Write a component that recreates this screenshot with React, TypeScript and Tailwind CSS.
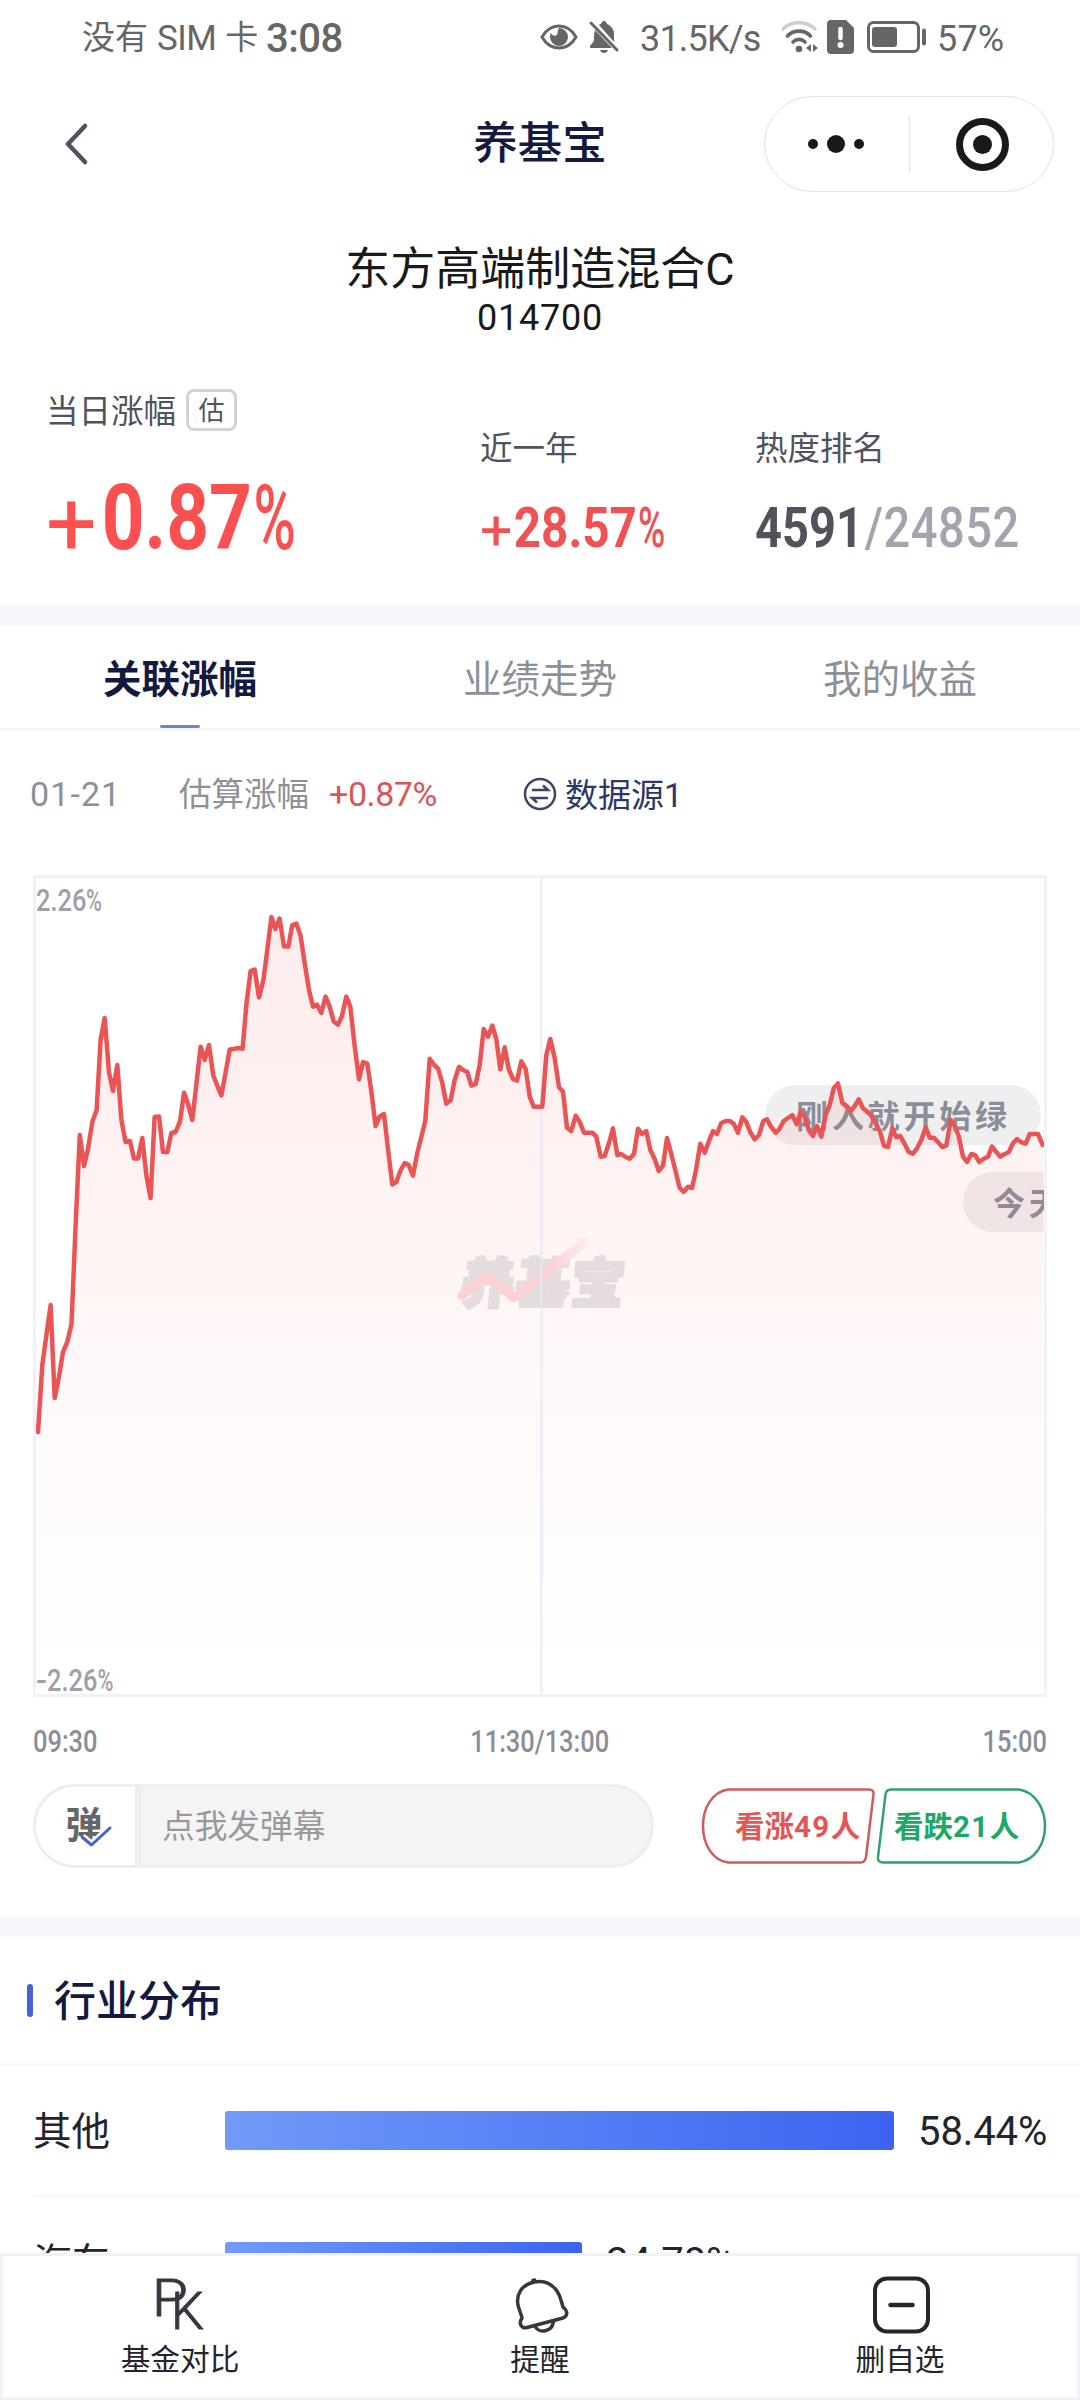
const axisTimes = ["09:30", "11:30/13:00", "15:00"];

const tabs = [
  { id: "related", title: "关联涨幅", active: true },
  { id: "trend", title: "业绩走势", active: false },
  { id: "income", title: "我的收益", active: false },
];

const industries = [
  { name: "其他", width: 669, value: "58.44%" },
  { name: "汽车", width: 357, value: "24.78%" },
];

// Intraday estimate, one vertex per minute
const trend =
  "38,1432 42.3,1365 46.5,1334.5 50.6,1305 54.7,1398 59,1376.6 63,1352 67.3,1342 71.5,1324 75.7,1223.6 79.8,1135 84,1166 88,1149 92.3,1122 96.6,1110 100.6,1040 104.7,1018 109,1072.4 113,1091 117.3,1065 121.4,1120 125.6,1142 130,1141 134,1158.5 138,1158.5 142.3,1138 146.4,1175.7 150.6,1198 154.6,1117 159,1116.4 163,1152 167.3,1152 171.4,1133 175.6,1132 180,1121.4 184,1092.7 188,1103.8 192.3,1120 196.4,1084 200.6,1046.8 204.7,1059.8 209,1045 213.3,1075.5 217.4,1085.8 221.4,1095.4 225.6,1072.4 229.7,1049.4 234,1049 238,1048 242.6,1048.7 246.5,1003.5 250.6,971 254.7,969.5 259,997.4 263.3,980.5 267.3,950 271.4,917 275.4,929 279.6,918.5 284,946.5 288.3,946.5 292.3,925 296.4,923.5 300.6,935.8 304.6,962.6 309,990 313,1006.6 317,1004.7 321.3,1013 325.6,996.6 329.7,1006.6 333.7,1021.5 338,1024.6 342,1016 346.3,996.6 350.3,1006.6 354.6,1045.6 359,1079.3 363,1062 367.3,1063.6 371.6,1093.5 375.6,1126 379.6,1116.4 384,1114 388,1149 392.3,1184.5 396.3,1182 400.7,1170 404.7,1163 408.7,1165 413,1175.7 417.3,1153 425.3,1121 429.7,1058.7 434,1064.7 438.3,1069 442.3,1083 446.3,1103.7 450.7,1100 454.7,1080 459,1066.7 463,1070 467.3,1072 471.3,1085.7 475.7,1084 479.7,1065 483.7,1029 488,1036.7 492.3,1025.5 496.3,1039 500.3,1069.3 504.7,1047.3 508.7,1069 513,1079 517,1080.7 521.3,1061.3 525.7,1069 529.7,1096.7 533.7,1106.7 542.3,1106.7 546.3,1055 550.3,1039 554.7,1058 559,1087.3 563,1091.7 567,1127.7 571.3,1131 575.7,1115.7 579.7,1122 584,1132.7 592.3,1132.7 596.3,1136.7 600.7,1156.7 604.7,1155.7 609,1143 613,1128.3 617.3,1155 621.3,1154 625.7,1157 629.7,1158.7 634,1154 638,1128.7 642,1134 646.3,1131 650.3,1150 654.7,1159 658.7,1171 663,1165.7 667,1138 671.3,1154 675.7,1171.7 679.7,1188 683.7,1192 688,1186.7 692,1188 696,1170 700.3,1143.7 704.7,1152.7 708.7,1141.7 713,1131 717,1134 721.3,1123 725.7,1121 730,1121 734,1124.3 738,1132.7 742.3,1117.3 746.3,1122 750.3,1132.3 754.7,1139.3 759,1135 763.3,1121 767,1119.3 771,1126.7 775.7,1132.7 779.3,1129.3 783.7,1121 788,1118 792.3,1115 796.7,1124.3 800.7,1111.7 804.7,1116.7 809,1130.7 813,1136 817,1126 821.3,1136.7 825.7,1114.3 829.7,1105 833.7,1088.3 838,1083.5 842.3,1102.7 846.7,1106 851,1111 854.7,1106 858.7,1099.3 863,1108.3 867.3,1111.7 871.3,1115.7 875.7,1123.3 880,1131.7 884,1145.7 888,1147 892.3,1128.3 896.3,1137.3 900.3,1136 904.3,1143.3 908.7,1152 913,1153.7 917,1148.3 921.3,1140 925.7,1127.3 929.7,1137.7 934,1137.7 938,1142 942.3,1147 946.3,1145.7 950.7,1120 954.7,1126 958.7,1136 963,1156.7 967,1162 971.3,1154 975.3,1155.3 979.3,1162 983.7,1158.7 988,1156.7 992,1146.7 996.3,1152 1000.3,1156.7 1004.7,1154 1008.7,1152.3 1013,1143.3 1017,1139 1021.3,1142.3 1025.7,1143.7 1029.7,1134 1038,1134 1042.7,1145";

function StatusBar() {
  return (
    <div className="flex h-[74px] items-center pl-[82px] text-[#666666]">
      <div className="flex w-[184px] gap-[9px] whitespace-nowrap pt-[3px] text-[33px]">
        <span>没有</span>
        <span className="text-[35px] tracking-[-0.5px]">SIM</span>
        <span>卡</span>
      </div>
      <span className="w-[274px] pt-[3px] text-[40px] font-medium tracking-[-0.5px]">3:08</span>

      {/* Eye */}
      <svg className="h-[26px] w-[38px]" viewBox="0 0 38 26" fill="none">
        <path d="M2 13C6 6 12 2 19 2s13 4 17 11c-4 7-10 11-17 11S6 20 2 13Z" stroke="currentColor" strokeWidth="3" />
        <path d="M19 4a9 9 0 1 1-9 9c0-1.500 .4-3 1-4 1 2 3 3.500 5 2.500C18.500 10.500 17 7 19 4Z" fill="currentColor" />
      </svg>

      {/* Muted bell */}
      <svg className="ml-[11px] h-[34px] w-[31px]" viewBox="0 0 31 34" fill="currentColor">
        <path d="M10 5c1.500-1 2.500-1.500 3-3 1-1.500 3-1.500 4 0 .5 1.500 1.500 2 3 3 3 2 5 5 5 9v8L10 5Z" />
        <path d="M6 10l17 18H1v-2l4-5c0-4 0-8 1-11ZM11 30h8c-1 4-7 4-8 0Z" />
        <path d="M2 3l26 27" stroke="currentColor" strokeWidth="3" strokeLinecap="round" />
      </svg>

      <span className="ml-[20px] w-[141px] pt-[3px] text-[36px] tracking-[-0.8px]">31.5K/s</span>

      {/* Wi-Fi */}
      <svg className="h-[34px] w-[38px]" viewBox="0 0 38 34" fill="none" strokeLinecap="round" strokeWidth="3.600">
        <path d="M2 9c9-8.500 23-8.500 32 0" stroke="#cfcfcf" />
        <path d="M6.500 16c6-6.500 17-6.500 23 0" stroke="currentColor" />
        <path d="M12 22c3.500-3.500 8.500-3.500 12 0" stroke="currentColor" />
        <circle cx="18" cy="29" r="3.300" fill="currentColor" />
        <path d="M30 24v8l-5-4ZM32 24v8l5-4Z" fill="currentColor" />
      </svg>

      {/* SIM warning */}
      <svg className="ml-[8px] h-[34px] w-[27px]" viewBox="0 0 27 34">
        <path d="M4 0h15l8 8v22a4 4 0 0 1-4 4H4a4 4 0 0 1-4-4V4a4 4 0 0 1 4-4Z" fill="currentColor" />
        <path d="M13.500 9v9" stroke="white" strokeWidth="4.500" strokeLinecap="round" />
        <circle cx="13.500" cy="25" r="3" fill="white" />
      </svg>

      {/* Battery */}
      <svg className="ml-[13px] h-[34px] w-[60px]" viewBox="0 0 60 34" fill="none">
        <rect x="1.500" y="2.500" width="50" height="29" rx="5" stroke="currentColor" strokeWidth="3" />
        <rect x="5" y="7" width="25" height="20" rx="3" fill="currentColor" />
        <rect x="55" y="8.500" width="4" height="17" rx="2" fill="currentColor" />
      </svg>
      <span className="ml-[10px] pt-[3px] text-[36px] tracking-[0.2px]">57%</span>
    </div>
  );
}

function NavBar() {
  return (
    <header className="grid h-[140px] grid-cols-3 items-center">
      <svg className="ml-[63px] h-[44px] w-[28px]" viewBox="0 0 28 44" fill="none">
        <path d="M22 4L5 22l17 18" stroke="#50535e" strokeWidth="4.500" strokeLinecap="round" strokeLinejoin="round" />
      </svg>
      <h1 className="text-center text-[44.5px] font-medium text-[#141a3f]">养基宝</h1>
      <div className="ml-[43.5px] flex h-[96px] w-[290px] items-center rounded-full border border-[#e3e3e3]">
        <div className="flex w-[144px] items-center justify-center gap-[9px] pr-[2px]">
          <span className="h-[10px] w-[10px] rounded-full bg-[#191919]" />
          <span className="h-[18px] w-[18px] rounded-full bg-[#191919]" />
          <span className="h-[10px] w-[10px] rounded-full bg-[#191919]" />
        </div>
        <span className="h-[57px] w-px bg-[#e3e3e3]" />
        <div className="flex flex-1 items-center justify-center pl-[2px]">
          <span className="flex h-[53px] w-[53px] items-center justify-center rounded-full border-[7px] border-[#191919]">
            <span className="h-[19px] w-[19px] rounded-full bg-[#191919]" />
          </span>
        </div>
      </div>
    </header>
  );
}

function FundSummary() {
  return (
    <section className="h-[391px] text-[#50535c]">
      <div className="flex flex-col items-center pt-[29px] text-[#191919]">
        <h2 className="text-[45px] leading-[54px]">东方高端制造混合C</h2>
        <p className="text-[36px] leading-[43px] tracking-[0.8px]">014700</p>
      </div>

      <div className="flex pl-[46px]">
        <div className="w-[434px] pt-[49px]">
          <div className="flex h-[42px] items-center">
            <span className="pt-[5px] text-[32.5px]">当日涨幅</span>
            <span className="ml-[10px] flex h-[42px] w-[51px] items-center justify-center rounded-lg border-[3px] border-[#d2d3d7] pt-[2px] text-[26px]">
              估
            </span>
          </div>
          <p className="mt-[38px] flex w-max origin-left scale-x-[0.83] text-[90px] font-bold leading-[100px] text-[#fb4f50]">
            <span className="mr-[16px] origin-left translate-y-[6px] scale-x-[1.2] font-normal">+</span>
            <span>0.87</span>
            <span className="ml-[2px] origin-left scale-x-[0.77] font-medium">%</span>
          </p>
        </div>

        <div className="w-[275px] pt-[88px]">
          <p className="text-[32.5px] leading-[42px]">近一年</p>
          <p className="mt-[28px] flex w-max origin-left scale-x-[0.85] text-[56px] font-bold leading-[60px] text-[#f05152]">
            <span className="mr-[8px] origin-left translate-y-[3px] scale-x-[1.2] font-normal">+</span>
            <span>28.57</span>
            <span className="ml-[1px] origin-left scale-x-[0.78] font-medium">%</span>
          </p>
        </div>

        <div className="pt-[88px]">
          <p className="text-[32.5px] leading-[42px]">热度排名</p>
          <p className="mt-[28px] w-max origin-left scale-x-[0.84] text-[56px] font-bold leading-[60px]">
            4591<span className="ml-[2px] font-medium tracking-[0.6px] text-[#a3a4ad]">/24852</span>
          </p>
        </div>
      </div>
    </section>
  );
}

function Tabs() {
  return (
    <nav className="grid h-[105px] grid-cols-3 border-b-[3px] border-[#f7f7fa]">
      {tabs.map((tab) => (
        <div key={tab.id} className="flex flex-col items-center justify-between pt-[27px]">
          <span
            className={
              tab.active
                ? "text-[38.5px] font-bold leading-[54px] text-[#141a3f]"
                : "text-[38.5px] leading-[54px] text-[#8e9098]"
            }
          >
            {tab.title}
          </span>
          {tab.active && <span className="h-[3px] w-[40px] rounded-full bg-[#6f84c9]" />}
        </div>
      ))}
    </nav>
  );
}

function Watermark() {
  return (
    <g>
      <text
        x="0"
        y="0"
        transform="translate(459 1303) skewX(-6)"
        fontSize="54"
        fontWeight="900"
        fill="#e4dcdd"
        stroke="#e4dcdd"
        strokeWidth="3"
        strokeLinejoin="round"
        textLength="164"
      >
        养基宝
      </text>
      <polyline
        points="461.700,1295.700 486,1276 514,1297.700 585,1242"
        fill="none"
        stroke="url(#markStroke)"
        strokeWidth="9"
        strokeLinecap="round"
        strokeLinejoin="round"
      />
    </g>
  );
}

function TrendChart() {
  return (
    <div className="relative mx-[33px] h-[822px] overflow-hidden border-[3px] border-[#f1f1f6]">
      <span className="absolute left-[729px] top-[207px] flex h-[60px] w-[276px] items-center rounded-full bg-[#efefef] pl-[31px] pt-[3px] text-[32px] font-bold tracking-[3.8px] whitespace-nowrap text-[#8b8e99]">
        刚入就开始绿
      </span>
      <span className="absolute left-[927px] top-[294px] flex h-[60px] w-[210px] items-center rounded-full bg-[#efefef] pl-[30px] pt-[3px] text-[32px] font-bold tracking-[3.8px] whitespace-nowrap text-[#8b8e99]">
        今天
      </span>
      <svg className="absolute inset-0 h-[816px] w-[1008px]" viewBox="36 878 1008 816">
        <defs>
          <linearGradient id="areaFill" gradientUnits="userSpaceOnUse" x1="0" y1="916" x2="0" y2="1670">
            <stop offset="0" stopColor="#f94f50" stopOpacity="0.11" />
            <stop offset="1" stopColor="#f94f50" stopOpacity="0" />
          </linearGradient>
          <linearGradient id="markStroke" gradientUnits="userSpaceOnUse" x1="460" y1="0" x2="590" y2="0">
            <stop offset="0" stopColor="#fdd0d4" />
            <stop offset="0.7" stopColor="#fdd0d4" />
            <stop offset="1" stopColor="#fdeeee" />
          </linearGradient>
        </defs>
        <path d={`M38,1694 L${trend} L1042.7,1694 Z`} fill="url(#areaFill)" />
        <Watermark />
        <path d="M541.500 878v816" stroke="#e6e6f0" strokeOpacity="0.6" strokeWidth="3" />
        <polyline points={trend} fill="none" stroke="#ea5455" strokeWidth="4.500" strokeLinejoin="round" strokeLinecap="round" />
      </svg>
      <div className="relative flex h-full flex-col justify-between pt-[10px] text-[31px] font-medium leading-[26px] text-[#a0a1a8]">
        <span className="flex w-max origin-left scale-x-[0.82]">
          2.26<span className="origin-left scale-x-[0.85]">%</span>
        </span>
        <span className="flex w-max origin-left scale-x-[0.82]">
          <span className="mr-[3px] origin-left scale-x-[1.3]">-</span>
          2.26<span className="origin-left scale-x-[0.85]">%</span>
        </span>
      </div>
    </div>
  );
}

function CommentBar() {
  return (
    <div className="mx-[33px] flex h-[84px] items-center justify-between">
      <div className="flex h-[84px] w-[621px] items-center overflow-hidden rounded-full border-[3px] border-[#eeeeee] bg-[#f4f4f4]">
        <div className="relative flex h-full w-[105px] items-center justify-center border-r-[6px] border-[#eeeeee] bg-white pr-[3px] text-[37px] font-bold text-[#666666]">
          弹
          <svg className="absolute left-[42px] top-[36px] h-[28px] w-[36px]" viewBox="0 0 36 28" fill="none">
            <path d="M4 14l10 8L32 5" stroke="white" strokeWidth="8" />
            <path d="M4 14l9.500 8L32 5" stroke="#4464c8" strokeWidth="3" strokeLinecap="round" strokeLinejoin="round" />
          </svg>
        </div>
        <span className="ml-[21px] pt-[3px] text-[32.7px] text-[#999999]">点我发弹幕</span>
      </div>

      <div className="relative flex h-[76px] w-[346px] items-center pt-[4px] text-[29.5px] font-bold whitespace-nowrap">
        <svg className="absolute inset-0 h-[76px] w-[346px]" viewBox="0 0 346 76" fill="none" strokeWidth="2.500">
          <path d="M27 1.500H168q5 0 4.500 5L165 69q-1 5.500-5 5.500H27C11 72 2 56 2 38S11 4 27 1.500Z" stroke="#d05a5d" />
          <path d="M318 1.500H190q-5 0-5.500 5L177 69q-.5 5.500 5 5.500H318C334 72 344 56 344 38S334 4 318 1.500Z" stroke="#2fa36c" />
        </svg>
        <span className="ml-[34px] w-[159px] text-[#e65556]">
          看涨<span className="tracking-[1.4px]">49</span>人
        </span>
        <span className="text-[#1ea866]">
          看跌<span className="tracking-[1.4px]">21</span>人
        </span>
      </div>
    </div>
  );
}

function IndustryList() {
  return (
    <section className="flex-1 overflow-hidden text-[#23242c]">
      <div className="flex h-[129px] items-center border-b-[3px] border-[#f8f8fa] pl-[27px]">
        <span className="h-[33px] w-[6px] rounded-full bg-[#4464d4]" />
        <h3 className="ml-[21px] pt-[3px] text-[42px] font-medium text-[#141a3f]">行业分布</h3>
      </div>
      {industries.map((item) => (
        <div key={item.name} className="ml-[33px] flex h-[131px] items-center border-b-[3px] border-[#f8f8fa]">
          <span className="w-[192px] pt-[4px] text-[38.5px]">{item.name}</span>
          <span
            className="h-[39px] rounded-[3px] bg-gradient-to-r from-[#719af8] to-[#3c63f0]"
            style={{ width: item.width }}
          />
          <span className="ml-[24px] pt-[4px] text-[40px] tracking-[-0.1px]">{item.value}</span>
        </div>
      ))}
    </section>
  );
}

function BottomBar() {
  return (
    <footer className="grid h-[147px] grid-cols-3 bg-white text-[29.7px] text-[#23242c] shadow-[inset_0_0_0_3px_#f0f2f8]">
      <div className="flex flex-col items-center pt-[21px]">
        <svg className="h-[60px] w-[60px]" viewBox="0 0 60 60" fill="#35373f" fontSize="52" fontWeight="300">
          <text x="0" y="42" transform="translate(2 0) scale(1.120 1)" stroke="#35373f" strokeWidth="1">P</text>
          <text x="21" y="55" stroke="#35373f" strokeWidth="1">K</text>
        </svg>
        <span className="leading-[52px]">基金对比</span>
      </div>
      <div className="flex flex-col items-center pt-[21px]">
        <svg className="h-[60px] w-[60px]" viewBox="510 2274 60 60" fill="none" stroke="#35373f" strokeWidth="3.500" strokeLinejoin="round" strokeLinecap="round">
          <path d="M534 2282c-13 3-18 13-16 23 1 5 3 8 4 13-4 6 0 11 5 9.500l36-9.500c5-2 5-7 0-11-2-6-2-10-6-16-5-7-13-11-23-9Z" />
          <path d="M533 2280.500l1.500-.5M535 2326.500c4 7 17 6 18.500-5" />
        </svg>
        <span className="leading-[52px]">提醒</span>
      </div>
      <div className="flex flex-col items-center pt-[21px]">
        <svg className="h-[60px] w-[60px]" viewBox="0 0 60 60" fill="none" stroke="#23252f" strokeWidth="4">
          <rect x="5" y="4.500" width="53" height="53" rx="12" />
          <path d="M20.500 31h22" strokeWidth="4.500" strokeLinecap="round" />
        </svg>
        <span className="leading-[52px]">删自选</span>
      </div>
    </footer>
  );
}

export default function App() {
  return (
    <main className="flex h-[2400px] w-[1080px] flex-col overflow-hidden bg-white font-['Roboto','Noto_Sans_CJK_SC',sans-serif] leading-none">
      <StatusBar />
      <NavBar />
      <FundSummary />
      <div className="h-[21px] bg-[#f6f8fc]" />
      <Tabs />

      <div className="flex h-[144px] items-center pb-[18px] pl-[30px] text-[32.5px] text-[#8e9098]">
        <span className="w-[149px] text-[34px] tracking-[1.1px]">01-21</span>
        <span className="w-[150px] pt-[2px]">估算涨幅</span>
        <span className="w-[194px] text-[34px] tracking-[-0.4px] text-[#d95557]">+0.87%</span>
        <svg className="h-[34px] w-[34px]" viewBox="0 0 34 34" fill="none" stroke="#3a4468" strokeWidth="2.500">
          <circle cx="17" cy="17" r="15" />
          <path d="M9 13h16l-5-4.500M25 21H9l5 4.500" />
        </svg>
        <span className="ml-[8px] pt-[2px] text-[33px] text-[#2c3763]">数据源1</span>
      </div>

      <TrendChart />

      <div className="mx-[33px] flex h-[87px] items-center justify-between pt-[2px] text-[31px] font-medium text-[#8c8d96]">
        {axisTimes.map((time, index) => (
          <span
            key={time}
            className={
              index === 0
                ? "w-[120px] origin-left scale-x-[0.82]"
                : index === 1
                  ? "scale-x-[0.82]"
                  : "w-[120px] origin-right scale-x-[0.82] text-right"
            }
          >
            {time}
          </span>
        ))}
      </div>

      <CommentBar />
      <div className="mt-[48px] h-[21px] bg-[#f6f8fc]" />
      <IndustryList />
      <BottomBar />
    </main>
  );
}
